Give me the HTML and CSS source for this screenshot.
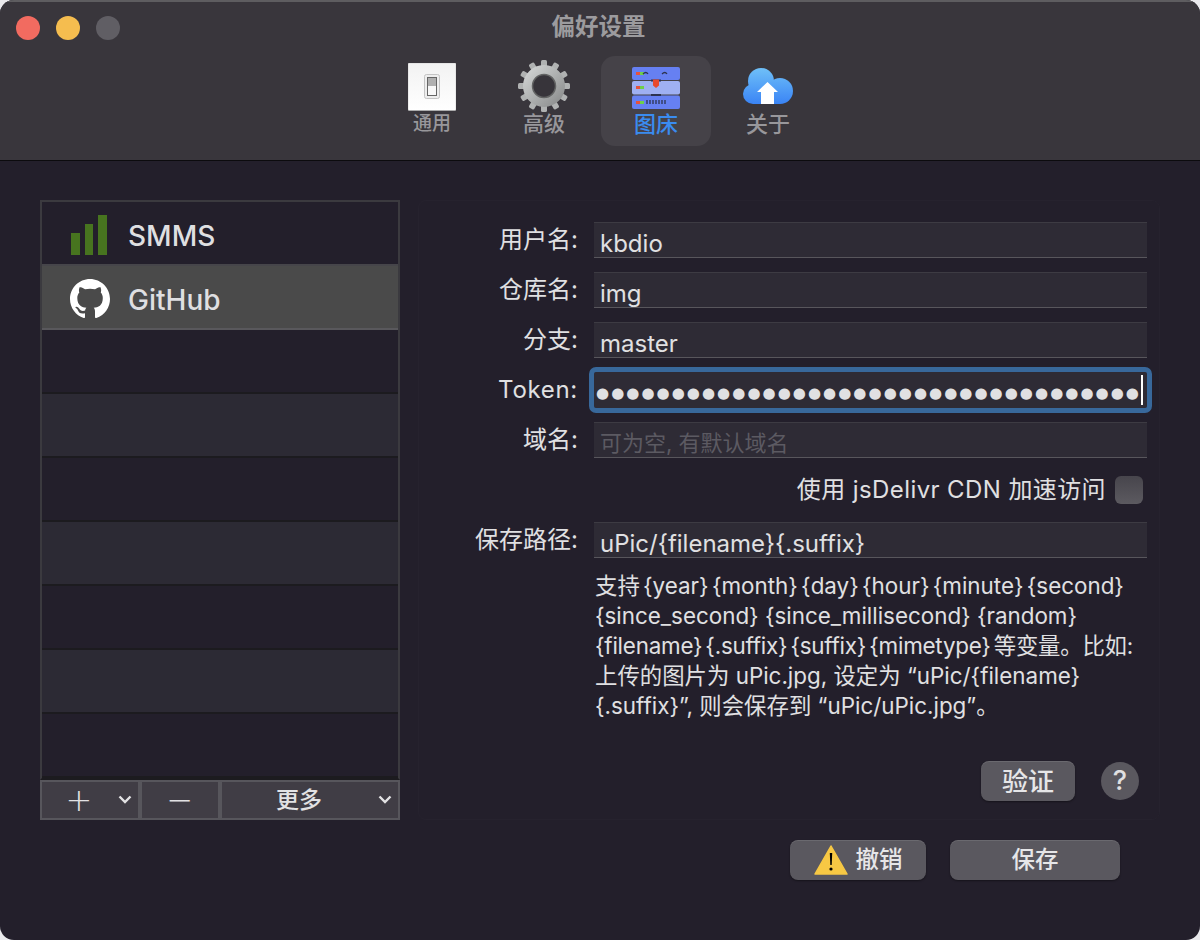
FILE: index.html
```html
<!DOCTYPE html>
<html lang="zh-CN">
<head>
    <meta charset="UTF-8">
    <title>偏好设置</title>
    <link rel="stylesheet" href="styles.css">
</head>
<body>
<div class="window">
    <div class="titlebar">
        <div class="lights">
            <span class="light red"></span>
            <span class="light yellow"></span>
            <span class="light off"></span>
        </div>
        <div class="title">偏好设置</div>
        <div class="tabs">
            <div class="tab">
                <svg class="icon-switch" width="48" height="48" viewBox="0 0 48 48">
                    <defs>
                        <linearGradient id="sw" x1="0" y1="0" x2="0" y2="1"><stop offset="0" stop-color="#f2f2f2"/><stop offset="1" stop-color="#ffffff"/></linearGradient>
                    </defs>
                    <rect width="48" height="47.500" rx="1" fill="url(#sw)" stroke="#bdbdbd" stroke-width=".5"/>
                    <rect x="16.500" y="11.500" width="15" height="24" rx="2" fill="#eee" stroke="#c4c4c4"/>
                    <rect x="19.500" y="14.500" width="9" height="18" fill="#f8f8f8" stroke="#666"/>
                    <rect x="20" y="15" width="8" height="8" fill="#b0b0b0"/>
                </svg>
                <span>通用</span>
            </div>
            <div class="tab">
                <svg class="icon-gear" width="52" height="52" viewBox="0 0 52 52">
                    <defs>
                        <linearGradient id="gear" x1="0" y1="0" x2="1" y2="1"><stop offset="0" stop-color="#cfd1d1"/><stop offset="1" stop-color="#8e9090"/></linearGradient>
                    </defs>
                    <g fill="#b0b2b2">
                        <rect x="23" y="0" width="6" height="52" rx="1.500"/>
                        <rect x="23" y="0" width="6" height="52" rx="1.500" transform="rotate(30 26 26)"/>
                        <rect x="23" y="0" width="6" height="52" rx="1.500" transform="rotate(60 26 26)"/>
                        <rect x="23" y="0" width="6" height="52" rx="1.500" transform="rotate(90 26 26)"/>
                        <rect x="23" y="0" width="6" height="52" rx="1.500" transform="rotate(120 26 26)"/>
                        <rect x="23" y="0" width="6" height="52" rx="1.500" transform="rotate(150 26 26)"/>
                    </g>
                    <circle cx="26" cy="26" r="16" fill="none" stroke="url(#gear)" stroke-width="10"/>
                    <circle cx="26" cy="26" r="11.500" fill="#37343a" stroke="#626363" stroke-width="1.500"/>
                </svg>
                <span>高级</span>
            </div>
            <div class="tab active">
                <svg class="icon-server" width="48" height="42" viewBox="0 0 48 42">
                    <rect y="0" width="48" height="13" rx="2" fill="#6680f2"/>
                    <rect y="14" width="48" height="13.500" rx="2" fill="#9fb0f2"/>
                    <rect y="28.500" width="48" height="13.500" rx="2" fill="#6680f2"/>
                    <rect x="4" y="5" width="4" height="3" fill="#e5533d"/>
                    <rect x="8" y="5" width="4" height="3" fill="#6fcf4a"/>
                    <rect x="4" y="19" width="4" height="3" fill="#e5533d"/>
                    <rect x="8" y="19" width="4" height="3" fill="#6fcf4a"/>
                    <rect x="4" y="34" width="4" height="3" fill="#e5533d"/>
                    <rect x="8" y="34" width="4" height="3" fill="#6fcf4a"/>
                    <path d="M11 7q3-3 5 0M30 7q3-3 5 0" fill="none" stroke="#2d3350" stroke-width="1.300"/>
                    <rect x="19" y="12.500" width="10" height="2" fill="#2d3350"/>
                    <rect x="19" y="27" width="10" height="2" fill="#2d3350"/>
                    <path d="M21 12.500h6v6l-3 2.500-3-2.500z" fill="#e8492c"/>
                    <path d="M15 33v4M18 33v4M21 33v4M24 33v4M27 33v4M30 33v4M33 33v4" stroke="#2d3350" stroke-width="1.300"/>
                </svg>
                <span>图床</span>
            </div>
            <div class="tab">
                <svg class="icon-cloud" width="50" height="36" viewBox="0 0 50 36">
                    <defs>
                        <linearGradient id="cl" gradientUnits="userSpaceOnUse" x1="0" y1="0" x2="0" y2="36"><stop offset="0" stop-color="#6fc0f8"/><stop offset="1" stop-color="#3a84f5"/></linearGradient>
                    </defs>
                    <g fill="url(#cl)">
                        <circle cx="18" cy="13" r="13"/>
                        <circle cx="37" cy="23" r="13"/>
                        <circle cx="10" cy="26" r="10"/>
                        <rect x="10" y="18" width="27" height="18"/>
                    </g>
                    <path d="M24.500 14L35 24h-4v12H18V24h-4z" fill="#fff"/>
                </svg>
                <span>关于</span>
            </div>
        </div>
    </div>

    <div class="content">
        <div class="sidebar">
            <div class="host-list">
                <div class="host first">
                    <svg width="38" height="40" viewBox="0 0 38 40" fill="#47741f">
                        <rect x="1" y="18" width="9" height="22"/>
                        <rect x="15" y="9" width="8" height="31"/>
                        <rect x="28" y="0" width="9" height="40"/>
                    </svg>
                    <span>SMMS</span>
                </div>
                <div class="host selected">
                    <svg width="40" height="40" viewBox="0 0 16 16" fill="#fff">
                        <path d="M8 0C3.580 0 0 3.580 0 8c0 3.540 2.290 6.530 5.470 7.590.4.070.55-.17.55-.38 0-.19-.01-.82-.01-1.490-2.010.37-2.530-.49-2.690-.94-.09-.23-.48-.94-.82-1.130-.28-.15-.68-.52-.01-.53.63-.01 1.080.58 1.230.82.720 1.210 1.870.870 2.330.660.070-.520.280-.870.510-1.070-1.780-.2-3.640-.890-3.640-3.950 0-.870.310-1.590.820-2.150-.080-.2-.360-1.020.080-2.120 0 0 .670-.210 2.200.820.640-.180 1.320-.270 2-.270.680 0 1.360.090 2 .270 1.530-1.040 2.200-.820 2.200-.820.440 1.100.160 1.920.080 2.120.510.560.820 1.270.820 2.150 0 3.070-1.870 3.750-3.650 3.950.290.250.540.730.540 1.480 0 1.070-.010 1.930-.010 2.200 0 .210.150.460.550.380A8.013 8.013 0 0 0 16 8c0-4.420-3.580-8-8-8z"/>
                    </svg>
                    <span>GitHub</span>
                </div>
                <div class="host"></div>
                <div class="host alt"></div>
                <div class="host"></div>
                <div class="host alt"></div>
                <div class="host"></div>
                <div class="host alt"></div>
                <div class="host"></div>
            </div>
            <div class="list-actions">
                <div class="action add">
                    <span class="action-label">+</span>
                    <svg class="caret" width="14" height="9" viewBox="0 0 14 9"><path d="M1.500 1.500L7 7l5.500-5.500" fill="none" stroke="#e2e2e4" stroke-width="2.400"/></svg>
                </div>
                <div class="action remove"><span class="action-label">−</span></div>
                <div class="action more">
                    <span class="action-label">更多</span>
                    <svg class="caret" width="14" height="9" viewBox="0 0 14 9"><path d="M1.500 1.500L7 7l5.500-5.500" fill="none" stroke="#e2e2e4" stroke-width="2.400"/></svg>
                </div>
            </div>
        </div>

        <div class="panel">
            <div class="form">
                <div class="row"><label>用户名:</label><div class="field">kbdio</div></div>
                <div class="row"><label>仓库名:</label><div class="field">img</div></div>
                <div class="row"><label>分支:</label><div class="field">master</div></div>
                <div class="row"><label class="latin">Token:</label><div class="field focused"><span class="dots">●●●●●●●●●●●●●●●●●●●●●●●●●●●●●●●●●●●●</span></div></div>
                <div class="row"><label>域名:</label><div class="field placeholder">可为空, 有默认域名</div></div>
                <div class="cdn-row"><span class="cdn-label">使用 jsDelivr CDN 加速访问</span><span class="checkbox"></span></div>
                <div class="row"><label>保存路径:</label><div class="field">uPic/{filename}{.suffix}</div></div>
                <p class="hint">
                    <span>支持 {year} {month} {day} {hour} {minute} {second}</span>
                    <span class="wide">{since_second} {since_millisecond} {random}</span>
                    <span class="tight">{filename} {.suffix} {suffix} {mimetype} 等变量。比如:</span>
                    <span class="wide">上传的图片为 uPic.jpg, 设定为 “uPic/{filename}</span>
                    <span class="wide">{.suffix}”, 则会保存到 “uPic/uPic.jpg”。</span>
                </p>
            </div>
            <div class="verify-row">
                <button class="btn verify">验证</button>
                <span class="help">?</span>
            </div>
        </div>
    </div>

    <div class="footer">
        <button class="btn cancel">
            <svg width="34" height="30" viewBox="0 0 34 30">
                <path d="M17 1L33 29H1z" fill="#f7c844" stroke="#f7c844" stroke-width="1.500" stroke-linejoin="round"/>
                <path d="M15.800 8h2.400l-.5 12h-1.400z"/>
                <circle cx="17" cy="24" r="1.600"/>
            </svg>
            撤销
        </button>
        <button class="btn save">保存</button>
    </div>
</div>
</body>
</html>
```

FILE: styles.css
```css
* {
    box-sizing: border-box;
}

body {
    margin: 0;
    background: #e9e9ec;
    font-family: 'Inter', 'Noto Sans CJK SC', sans-serif;
    color: #e0e0e2;
}

.window {
    width: 1200px;
    height: 940px;
    background: #231f2b;
    border-radius: 14px;
    overflow: hidden;
    display: flex;
    flex-direction: column;
}

.titlebar {
    position: relative;
    height: 161px;
    flex: none;
    background: #39363c;
    border-top: 2px solid #5e5d60;
    border-bottom: 1px solid #0c0b0e;
}

.lights {
    position: absolute;
    left: 16px;
    top: 14px;
    display: flex;
    gap: 16px;
}

.light {
    width: 24px;
    height: 24px;
    border-radius: 50%;
}

.red { background: #f26b60; }
.yellow { background: #f5bd4f; }
.off { background: #605e64; }

.title {
    height: 54px;
    padding: 7px 3px 0 0;
    text-align: center;
    font-size: 23.500px;
    line-height: 36px;
    font-weight: 700;
    color: #9c9b9e;
}

.tabs {
    display: flex;
    justify-content: center;
}

.tab {
    width: 112px;
    height: 90px;
    border-radius: 14px;
    display: flex;
    flex-direction: column;
    align-items: center;
    justify-content: flex-end;
    font-size: 21px;
    font-weight: 500;
    line-height: 28px;
    color: #98979b;
}

.tab:first-child { font-size: 19px; }
.tab:last-child { font-size: 22px; }

.tab span {
    margin-bottom: 8px;
}

.tab.active {
    width: 110px;
    margin: 0 1px;
    background: #454248;
    font-size: 22px;
    color: #3a8cf0;
}

.icon-switch { margin-bottom: -1px; }
.icon-gear { margin-bottom: -2px; }
.icon-server { margin-bottom: 1px; }
.icon-cloud { margin-bottom: 6px; }

.content {
    display: flex;
    padding: 39px 41px 0 40px;
    gap: 18px;
}

.sidebar {
    width: 360px;
    flex: none;
}

.host-list {
    height: 580px;
    border: 2px solid #3b3a3f;
    border-bottom-color: #1c1b1f;
    overflow: hidden;
}

.host {
    height: 64px;
    display: flex;
    align-items: center;
    gap: 19px;
    padding: 4px 0 0 28px;
    border-bottom: 2px solid #1c1b1f;
    font-size: 28px;
    font-weight: 500;
    color: #dfdfe1;
}

.host span {
    margin-top: 2px;
}

.host.first {
    gap: 20px;
    border-bottom-color: #46454a;
}

.host.alt {
    background: #2c2a34;
}

.host.selected {
    gap: 18px;
    background: #4a4a4a;
    border-bottom-color: #59585c;
}

.list-actions {
    display: flex;
    height: 40px;
}

.action {
    position: relative;
    display: flex;
    align-items: center;
    justify-content: center;
    background: #403d45;
    border: 2px solid #57565c;
    color: #e2e2e4;
}

.add { width: 100px; padding-right: 22px; }
.remove { width: 80px; }
.more { width: 180px; padding-right: 22px; }

.action-label {
    font-size: 23px;
    font-weight: 500;
    line-height: 1;
}

.add .action-label,
.remove .action-label {
    font-family: 'DejaVu Sans', sans-serif;
    font-size: 32px;
    font-weight: 300;
}

.caret {
    position: absolute;
    right: 6px;
    top: 13px;
}

.panel {
    flex: 1;
    height: 620px;
    padding: 21px 12px 18px 0;
    border: 1px solid #26222e;
    border-radius: 8px;
    display: flex;
    flex-direction: column;
    justify-content: space-between;
}

.form {
    display: flex;
    flex-direction: column;
    gap: 14px;
}

.row {
    display: flex;
    align-items: flex-start;
    gap: 16px;
}

.row label {
    width: 159px;
    text-align: right;
    font-size: 24px;
    line-height: 36px;
}

.row label.latin {
    letter-spacing: .7px;
}

.field {
    position: relative;
    flex: 1;
    height: 36px;
    padding: 0 6px;
    background: #2e2b35;
    border-top: 1px solid #3d3b43;
    border-bottom: 1px solid #58565c;
    font-size: 24px;
    line-height: 41px;
    white-space: nowrap;
}

.field.focused {
    border: 0;
    outline: 5px solid #38689b;
    border-radius: 2px;
    padding: 0 4px 0 2px;
}

.dots {
    display: block;
    border-right: 2px solid #fff;
    height: 30px;
    margin-top: 3px;
    overflow: hidden;
    font-family: 'DejaVu Sans', sans-serif;
    font-size: 15px;
    line-height: 36px;
    letter-spacing: 2.050px;
    color: #e0e0e2;
}

.field.placeholder {
    color: #5c5a62;
    font-size: 22px;
}

.cdn-row {
    display: flex;
    justify-content: flex-end;
    align-items: center;
    gap: 9px;
    height: 36px;
    padding-right: 4px;
    font-size: 24px;
    letter-spacing: .4px;
}

.cdn-label {
    padding-bottom: 5px;
}

.checkbox {
    width: 28px;
    height: 28px;
    border-radius: 6px;
    background: linear-gradient(#47454c, #5c5a60);
}

.hint {
    margin: -1px 0 0 176px;
    font-size: 22.400px;
    word-spacing: -3px;
    line-height: 30px;
    white-space: nowrap;
}

.hint span {
    display: block;
}

.hint .wide {
    word-spacing: 0;
}

.hint .tight {
    letter-spacing: -.22px;
}

.verify-row {
    display: flex;
    justify-content: flex-end;
    align-items: center;
    gap: 26px;
    padding-right: 8px;
}

.btn {
    height: 40px;
    padding: 0 0 4px;
    border: 0;
    border-radius: 8px;
    background: #5a585f;
    box-shadow: inset 0 1px 0 rgba(255, 255, 255, .1), 0 1px 2px rgba(0, 0, 0, .4);
    color: #e6e6e8;
    font-family: inherit;
    font-size: 23.500px;
    font-weight: 500;
    display: flex;
    align-items: center;
    justify-content: center;
}

.verify {
    width: 94px;
    font-size: 26px;
}

.help {
    width: 38px;
    height: 38px;
    border-radius: 50%;
    background: #5a585f;
    text-align: center;
    font-size: 27px;
    font-weight: 500;
    line-height: 38px;
}

.footer {
    display: flex;
    justify-content: flex-end;
    gap: 24px;
    padding: 20px 80px 0 0;
}

.cancel { width: 136px; gap: 8px; }
.cancel svg { margin-top: 4px; }
.save { width: 170px; }
```
